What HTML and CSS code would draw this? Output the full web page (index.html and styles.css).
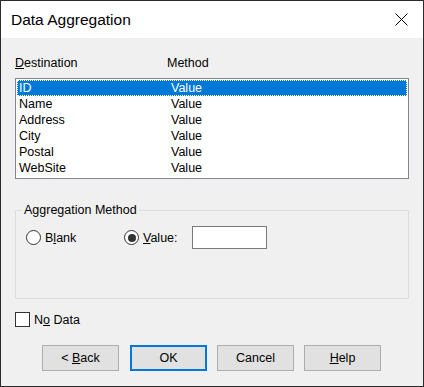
FILE: index.html
```html
<!DOCTYPE html>
<html lang="en">
<head>
  <meta charset="UTF-8">
  <title>Data Aggregation</title>
  <link rel="stylesheet" href="styles.css">
</head>
<body>

  <div class="dialog">
    <!-- Title bar -->
    <div class="titlebar">
      <span class="title">Data Aggregation</span>
      <svg class="close" width="13" height="13" viewBox="0 0 13 13">
        <path d="M0.5 0.5 L12.5 12.5 M12.5 0.5 L0.5 12.5" stroke="#000" stroke-width="1" fill="none"/>
      </svg>
    </div>

    <div class="content">
      <!-- Column headers -->
      <div class="columns">
        <span class="col-dest"><u>D</u>estination</span>
        <span>Method</span>
      </div>

      <!-- List -->
      <div class="listbox">
        <div class="row selected"><span class="col-name">ID</span><span>Value</span></div>
        <div class="row"><span class="col-name">Name</span><span>Value</span></div>
        <div class="row"><span class="col-name">Address</span><span>Value</span></div>
        <div class="row"><span class="col-name">City</span><span>Value</span></div>
        <div class="row"><span class="col-name">Postal</span><span>Value</span></div>
        <div class="row"><span class="col-name">WebSite</span><span>Value</span></div>
      </div>

      <!-- Aggregation method group -->
      <fieldset class="group">
        <legend>Aggregation Method</legend>
        <div class="radio-row">
          <label class="radio blank"><span class="dot"></span><span>B<u>l</u>ank</span></label>
          <label class="radio checked"><span class="dot"></span><span><u>V</u>alue:</span></label>
          <span class="textbox"></span>
        </div>
      </fieldset>

      <label class="checkbox"><span class="box"></span><span>N<u>o</u> Data</span></label>

      <!-- Buttons -->
      <div class="buttons">
        <button>&lt; <u>B</u>ack</button>
        <button class="default">OK</button>
        <button>Cancel</button>
        <button><u>H</u>elp</button>
      </div>
    </div>
  </div>

</body>
</html>
```

FILE: styles.css
```css
:root {
  --face-color: #f0f0f0;
  --border-dark: #2b2b2b;
  --select-color: #0078d7;
  --button-color: #e1e1e1;
  --button-border: #adadad;
}

body {
  margin: 0;
  font-family: "Liberation Sans", Arial, sans-serif;
  font-size: 12.5px;
  color: #000;
}

.dialog {
  width: 424px;
  height: 387px;
  box-sizing: border-box;
  border: 1px solid var(--border-dark);
  background: var(--face-color);
}

.titlebar {
  height: 37px;
  background: #fff;
  display: flex;
  align-items: center;
  justify-content: space-between;
  padding: 0 15px 0 10px;
}

.title {
  font-size: 15.5px;
  color: #000;
}

.close {
  display: block;
}

.content {
  padding: 17px 14px 0 14px;
}

.columns {
  display: flex;
  line-height: 16px;
}

.col-dest {
  width: 152px;
}

.listbox {
  margin-top: 7px;
  height: 101px;
  box-sizing: border-box;
  border: 1px solid #828790;
  background: #fff;
  padding: 1px;
}

.row {
  display: flex;
  height: 16px;
  line-height: 16px;
  padding-left: 2px;
}

.row .col-name {
  width: 152px;
}

.row.selected {
  background: var(--select-color);
  color: #fff;
  outline: 1px dotted #fff;
  outline-offset: -1px;
}

.group {
  margin: 23px 0 0 0;
  padding: 0 6px 49px 6px;
  border: 1px solid #dcdcdc;
  min-width: 0;
}

.group legend {
  padding: 0 2px;
  line-height: 16px;
}

.radio-row {
  display: flex;
  align-items: center;
  margin-top: 8px;
  height: 23px;
}

.radio {
  display: flex;
  align-items: center;
}

.radio.blank {
  margin-left: 4px;
  width: 98px;
}

.radio.checked {
  width: 68px;
}

.radio .dot {
  width: 13px;
  height: 13px;
  border: 1px solid #333;
  border-radius: 50%;
  background: #fff;
  margin-right: 4px;
  position: relative;
}

.radio.checked .dot::after {
  content: "";
  position: absolute;
  left: 2.5px;
  top: 2.5px;
  width: 8px;
  height: 8px;
  border-radius: 50%;
  background: #333;
}

.textbox {
  width: 75px;
  height: 23px;
  box-sizing: border-box;
  border: 1px solid #7a7a7a;
  background: #fff;
}

.checkbox {
  display: flex;
  align-items: center;
  margin-top: 13px;
  height: 15px;
}

.checkbox .box {
  width: 13px;
  height: 13px;
  border: 1px solid #333;
  background: #fff;
  margin-right: 4px;
}

.buttons {
  display: flex;
  gap: 10px;
  margin-top: 18px;
  padding-left: 27px;
}

.buttons button {
  width: 77px;
  height: 26px;
  font-family: inherit;
  font-size: 12.5px;
  color: #000;
  background: var(--button-color);
  border: 1px solid var(--button-border);
  padding: 0;
}

.buttons button.default {
  border: 2px solid var(--select-color);
  margin-left: 1px;
}
```
